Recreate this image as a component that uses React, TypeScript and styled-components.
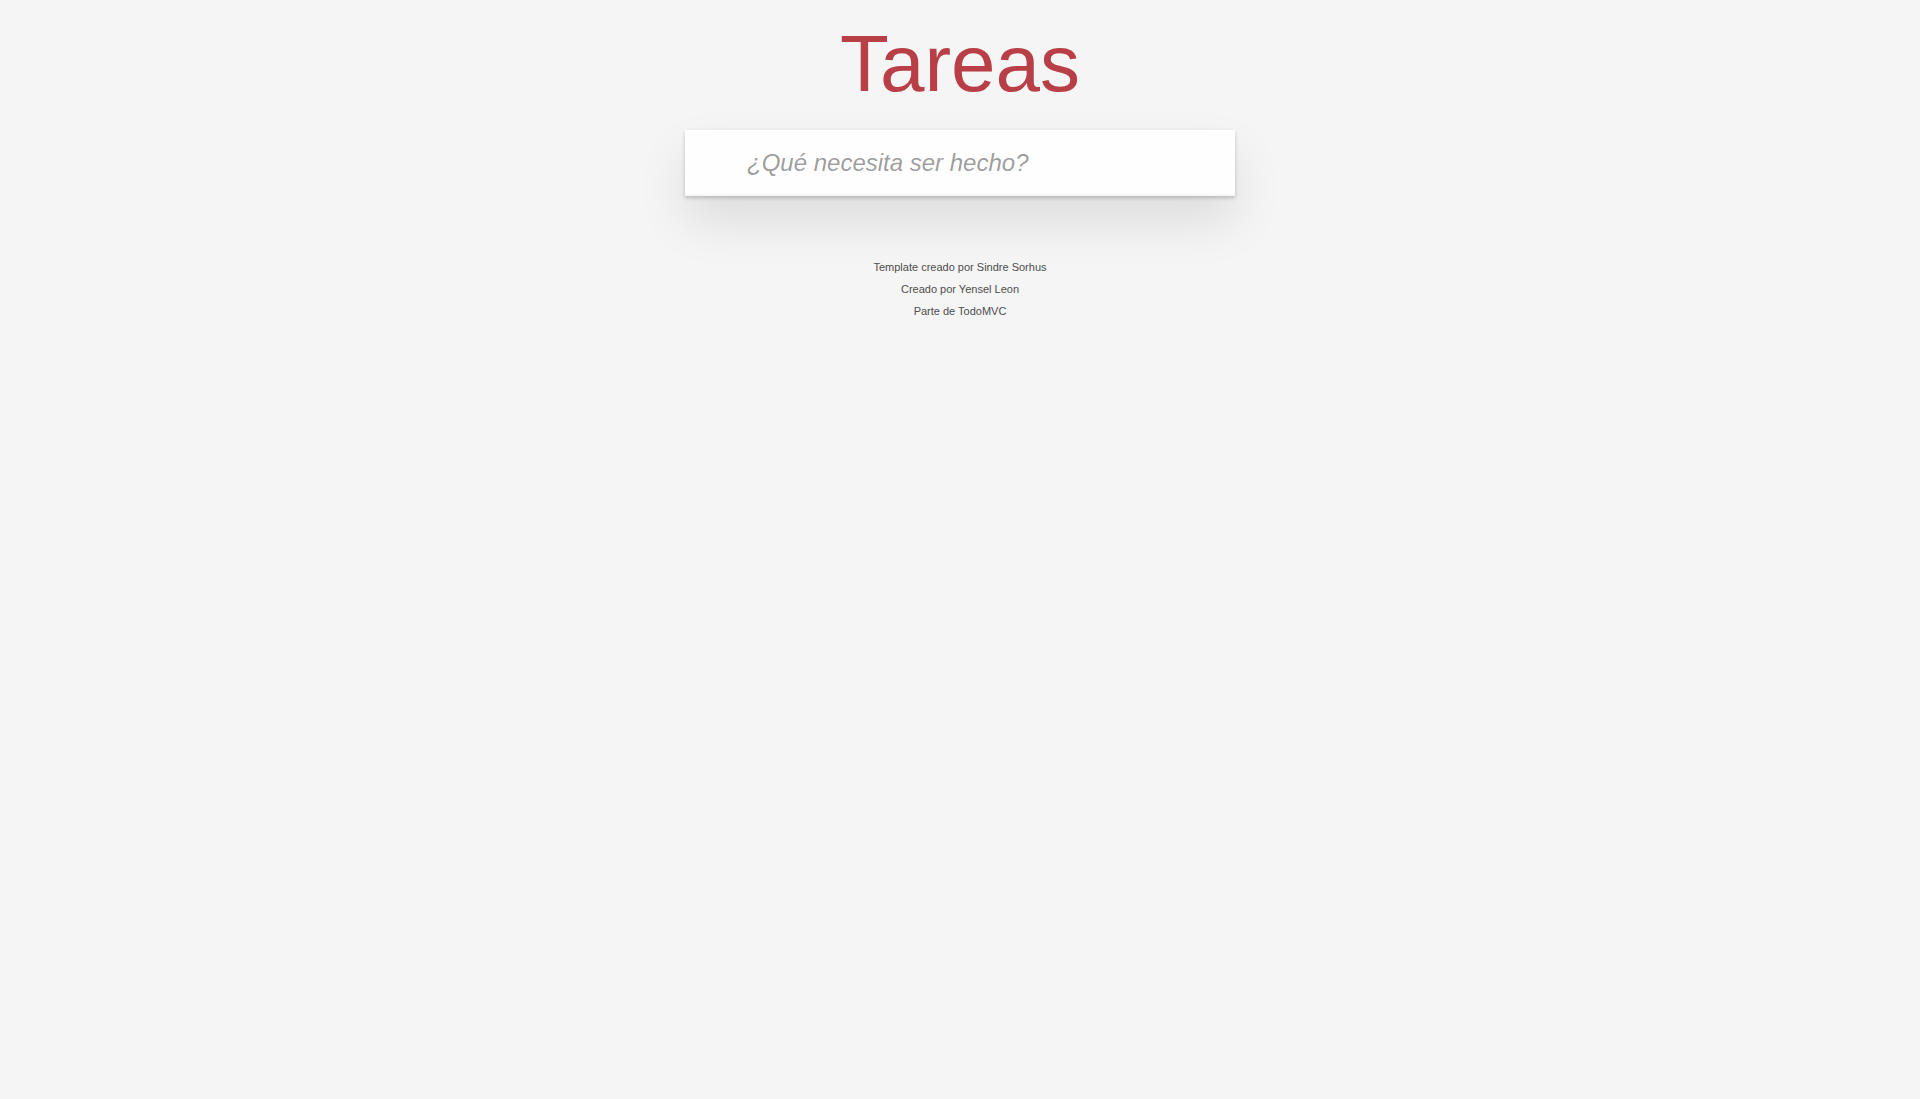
import styled, { createGlobalStyle } from 'styled-components';

const GlobalStyle = createGlobalStyle`
  html, body {
    margin: 0;
    padding: 0;
  }
  body {
    font: 14px 'Liberation Sans', Arial, Helvetica, sans-serif;
    line-height: 1.4em;
    background: #f5f5f5;
    color: #111111;
    min-width: 230px;
    -webkit-font-smoothing: antialiased;
  }
`;

const Page = styled.div`
  max-width: 550px;
  margin: 0 auto;
  display: flex;
  flex-direction: column;
`;

const Title = styled.h1`
  margin: 0 0 26px;
  padding-top: 24px;
  font-size: 80px;
  line-height: 80px;
  font-weight: 200;
  text-align: center;
  color: #b83f45;
  text-rendering: optimizeLegibility;
`;

const TodoApp = styled.section`
  background: #fff;
  position: relative;
  box-shadow: 0 2px 4px 0 rgba(0, 0, 0, 0.2), 0 25px 50px 0 rgba(0, 0, 0, 0.1);
`;

const NewTodo = styled.input`
  display: block;
  width: 100%;
  height: 66px;
  box-sizing: border-box;
  margin: 0;
  padding: 16px 16px 16px 62px;
  border: none;
  outline: none;
  background: rgba(0, 0, 0, 0.003);
  box-shadow: inset 0 -2px 1px rgba(0, 0, 0, 0.03);
  font-family: inherit;
  font-size: 24px;
  line-height: 1.4em;
  color: inherit;

  &::placeholder {
    font-style: italic;
    font-weight: 400;
    color: rgba(0, 0, 0, 0.4);
  }
`;

const Info = styled.footer`
  margin: 66px auto 0;
  color: #4d4d4d;
  font-size: 11px;
  text-align: center;
`;

const InfoLine = styled.p`
  margin: 11px 0;
  line-height: 1;
  &:first-child {
    margin-top: 0;
  }
`;

const InfoLink = styled.a`
  color: inherit;
  text-decoration: none;
  font-weight: 400;
`;

const App = () => (
  <>
    <GlobalStyle />
    <Page>
      <Title>Tareas</Title>
      <TodoApp>
        <NewTodo placeholder="¿Qué necesita ser hecho?" />
      </TodoApp>
      <Info>
        <InfoLine>
          Template creado por <InfoLink href="#">Sindre Sorhus</InfoLink>
        </InfoLine>
        <InfoLine>
          Creado por <InfoLink href="#">Yensel Leon</InfoLink>
        </InfoLine>
        <InfoLine>
          Parte de <InfoLink href="#">TodoMVC</InfoLink>
        </InfoLine>
      </Info>
    </Page>
  </>
);

export default App;
